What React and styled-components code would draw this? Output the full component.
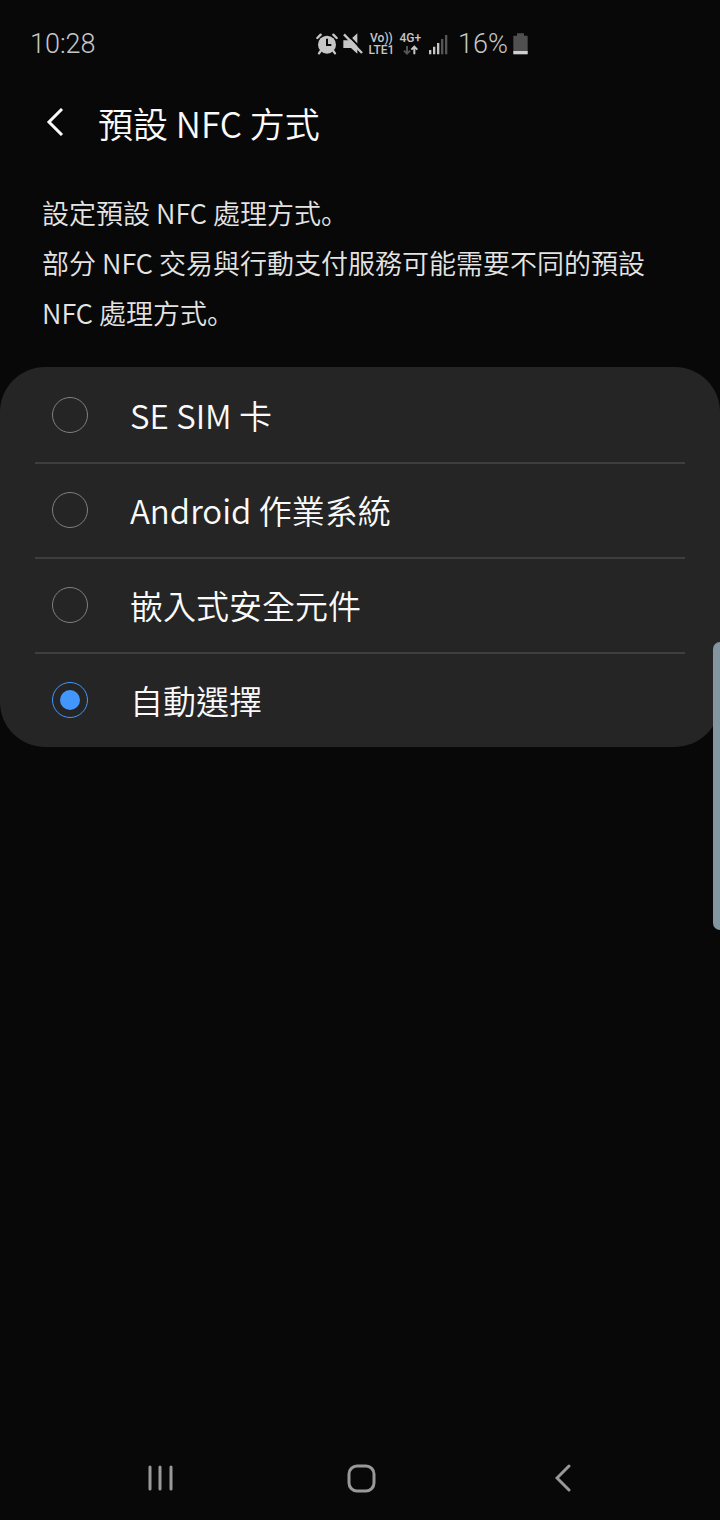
import React, { useState } from 'react';
import styled, { createGlobalStyle } from 'styled-components';

const GlobalStyle = createGlobalStyle`
* {
box-sizing: border-box;
}
body {
margin: 0;
background: #080808;
color: #fafafa;
font-family: "Noto Sans CJK TC", sans-serif;
font-weight: 350;
}
`

const Screen = styled.div`
min-height: 100vh;
display: flex;
flex-direction: column;
background: #080808;
`

const StatusBar = styled.div`
height: 88px;
padding: 0 192px 0 30px;
display: flex;
align-items: center;
justify-content: space-between;
color: #c6c6c6;
font-family: Roboto, sans-serif;
font-size: 27px;
font-weight: 300;
`

const StatusIcons = styled.div`
display: flex;
align-items: center;
gap: 5px;
`

const NetworkLabel = styled.div`
display: flex;
flex-direction: column;
align-items: center;
font-size: 12px;
font-weight: 500;
line-height: 12px;
`

const Signal = styled.svg`
margin: 0 5px 0 3px;
`

const Header = styled.header`
height: 70px;
padding: 0 42px;
display: flex;
align-items: center;
gap: 30px;
`

const BackButton = styled.button`
width: 26px;
height: 40px;
padding: 0 0 2px;
border: 0;
background: none;
color: #fafafa;
display: flex;
align-items: center;
justify-content: center;
`

const Title = styled.h1`
margin: 0;
font-size: 35px;
font-weight: 350;
line-height: 50px;
`

const Description = styled.p`
margin: 0;
padding: 30px 42px 29px;
color: #e4e4e4;
font-family: "Noto Sans CJK SC", sans-serif;
font-size: 27px;
line-height: 50px;
`

const OptionCard = styled.div`
padding: 0 35px;
border-radius: 45px;
background: #252525;
`

const Option = styled.label`
height: 95px;
padding-left: 17px;
display: flex;
align-items: center;
gap: 42px;
font-size: 33px;
line-height: 48px;
& + & {
box-shadow: inset 0 2px #3e3e3e;
}
`

const Radio = styled.input`
appearance: none;
flex: none;
width: 36px;
height: 36px;
margin: 0;
border: 1px solid #808080;
border-radius: 50%;
display: grid;
place-items: center;
&:checked {
border-color: #4297ff;
}
&:checked::after {
content: "";
width: 20px;
height: 20px;
border-radius: 50%;
background: #4297ff;
}
`

const NavBar = styled.nav`
height: 84px;
margin-top: auto;
padding: 0 56px 0 59px;
display: grid;
grid-template-columns: repeat(3, 1fr);
`

const NavButton = styled.button`
padding: 0;
border: 0;
background: none;
color: #999;
display: flex;
align-items: center;
justify-content: center;
`

const EdgeHandle = styled.button`
position: fixed;
top: 642px;
right: 0;
width: 7px;
height: 288px;
padding: 0;
border: 0;
border-radius: 7px 0 0 7px;
background: #8295a0;
`

const options = [
    { id: 'sim', name: 'SE SIM 卡' },
    { id: 'android', name: 'Android 作業系統' },
    { id: 'embedded', name: '嵌入式安全元件' },
    { id: 'auto', name: '自動選擇' },
]

function AlarmIcon() {
    return (
        <svg width="22" height="22" viewBox="0 0 66 66" fill="none" stroke="currentColor">
            <circle cx="33" cy="35" r="27" fill="currentColor" stroke="none" />
            <path d="M4 15L14 5M62 15L52 5" strokeWidth="7" strokeLinecap="round" />
            <path d="M14 54L9 61M52 54L57 61" strokeWidth="7" strokeLinecap="round" />
            <path d="M33 17V36H46" stroke="#080808" strokeWidth="6" />
        </svg>
    )
}

function MuteIcon() {
    return (
        <svg width="20" height="22" viewBox="0 0 60 66">
            <path d="M1 22H20L43 1V62L24 45H1Z" fill="currentColor" />
            <path d="M7 -2L64 57" stroke="#080808" strokeWidth="6" />
            <path d="M3 4L57 60" stroke="currentColor" strokeWidth="7" />
        </svg>
    )
}

function DataArrows() {
    return (
        <svg width="15" height="12" viewBox="0 0 45 36" fill="none" strokeWidth="6">
            <path d="M12 6V29M3 20L12 29L21 20" stroke="#555" />
            <path d="M34 31V8M25 17L34 8L43 17" stroke="currentColor" />
        </svg>
    )
}

function SignalIcon() {
    return (
        <Signal width="19" height="22" viewBox="0 0 57 66">
            <path d="M0 51h7v13h-7zM12 41h7v23h-7zM24 30h7v34h-7z" fill="currentColor" />
            <path d="M36 18h7v46h-7zM48 6h7v58h-7z" fill="#555" />
        </Signal>
    )
}

function BatteryIcon() {
    return (
        <svg width="15" height="22" viewBox="0 0 45 66">
            <path d="M12 1H33V8H42Q44 8 44 10V62Q44 64 42 64H3Q1 64 1 62V10Q1 8 3 8H12Z" fill="#505050" />
            <path d="M1 54H44V62Q44 64 42 64H3Q1 64 1 62Z" fill="#d0d0d0" />
        </svg>
    )
}

function OptionRow({ option, selected, changeOption }) {
    return (
        <Option>
            <Radio
                type="radio"
                name="nfc"
                value={option.id}
                checked={selected}
                onChange={() => changeOption(option.id)} />
            <span>{option.name}</span>
        </Option>
    )
}

function App() {
    const [active, setActive] = useState('auto');

    return (
        <Screen>
            <GlobalStyle />
            <StatusBar>
                <span>10:28</span>
                <StatusIcons>
                    <AlarmIcon />
                    <MuteIcon />
                    <NetworkLabel>
                        <span>Vo))</span>
                        <span>LTE1</span>
                    </NetworkLabel>
                    <NetworkLabel>
                        <span>4G+</span>
                        <DataArrows />
                    </NetworkLabel>
                    <SignalIcon />
                    <span>16%</span>
                    <BatteryIcon />
                </StatusIcons>
            </StatusBar>
            <Header>
                <BackButton aria-label="返回">
                    <svg width="18" height="28" viewBox="0 0 18 28" fill="none" stroke="currentColor" strokeWidth="3">
                        <path d="M16 1L3 14L16 27" />
                    </svg>
                </BackButton>
                <Title>預設 NFC 方式</Title>
            </Header>
            <Description>
                設定預設 NFC 處理方式。<br />
                部分 NFC 交易與行動支付服務可能需要不同的預設 NFC 處理方式。
            </Description>
            <OptionCard role="radiogroup" aria-label="預設 NFC 方式">
                {options.map((option) => (
                    <OptionRow
                        key={option.id}
                        option={option}
                        selected={active === option.id}
                        changeOption={setActive} />
                ))}
            </OptionCard>
            <NavBar>
                <NavButton aria-label="最近">
                    <svg width="26" height="28" viewBox="0 0 26 28" stroke="currentColor" strokeWidth="3" strokeLinecap="round">
                        <path d="M3 3V25M13 3V25M24 3V25" />
                    </svg>
                </NavButton>
                <NavButton aria-label="首頁">
                    <svg width="30" height="30" viewBox="0 0 30 30" fill="none" stroke="currentColor" strokeWidth="3">
                        <rect x="3" y="3" width="25" height="25" rx="8" />
                    </svg>
                </NavButton>
                <NavButton aria-label="返回">
                    <svg width="16" height="28" viewBox="0 0 16 28" fill="none" stroke="currentColor" strokeWidth="3" strokeLinecap="round">
                        <path d="M14 2L2 14L14 26" />
                    </svg>
                </NavButton>
            </NavBar>
            <EdgeHandle aria-label="側螢幕面板" />
        </Screen>
    )
}
export default App;
